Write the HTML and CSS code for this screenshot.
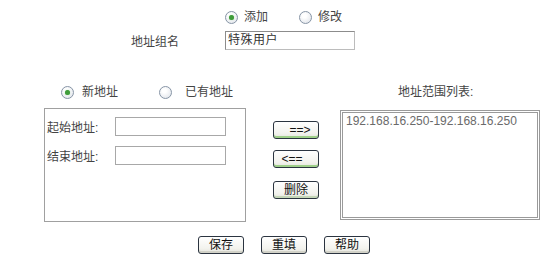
FILE: index.html
```html
<!DOCTYPE html>
<html lang="zh-CN">
<head>
    <meta charset="UTF-8">
    <title>地址组</title>
    <link rel="stylesheet" href="styles.css">
</head>
<body>
    <div class="page">
        <div class="mode-row">
            <span class="radio checked"></span><span class="radio-text">添加</span>
            <span class="radio gap-mode"></span><span class="radio-text">修改</span>
        </div>
        <div class="name-row">
            <span class="name-label">地址组名</span>
            <span class="text-input name-input">特殊用户</span>
        </div>
        <div class="editor">
            <div class="col-left">
                <div class="type-row">
                    <span class="radio checked"></span><span class="radio-text first-text">新地址</span>
                    <span class="radio gap-type"></span><span class="radio-text second-text">已有地址</span>
                </div>
                <div class="addr-box">
                    <div class="addr-row">
                        <span class="addr-label">起始地址:</span>
                        <span class="text-input addr-input"></span>
                    </div>
                    <div class="addr-row">
                        <span class="addr-label">结束地址:</span>
                        <span class="text-input addr-input"></span>
                    </div>
                </div>
            </div>
            <div class="col-mid">
                <button class="btn btn-green btn-right">==&gt;</button>
                <button class="btn btn-green btn-left">&lt;==</button>
                <button class="btn btn-del">删除</button>
            </div>
            <div class="col-right">
                <div class="list-title">地址范围列表:</div>
                <div class="list-box">
                    <div class="list-item">192.168.16.250-192.168.16.250</div>
                </div>
            </div>
        </div>
        <div class="actions">
            <button class="btn">保存</button>
            <button class="btn">重填</button>
            <button class="btn">帮助</button>
        </div>
    </div>
</body>
</html>
```

FILE: styles.css
```css
body {
    margin: 0;
    background: #ffffff;
    font-family: "Liberation Sans", "Noto Sans CJK SC", sans-serif;
    font-size: 12px;
    color: #444444;
}
.page {
    width: 551px;
    height: 257px;
    overflow: hidden;
}
.mode-row {
    display: flex;
    align-items: center;
    height: 13px;
    padding-top: 11px;
    padding-left: 225px;
}
.radio {
    display: inline-block;
    box-sizing: border-box;
    width: 13px;
    height: 13px;
    border: 1px solid #8795a6;
    border-radius: 50%;
    background: radial-gradient(circle at 40% 35%, #ffffff 20%, #e6e9ee 75%, #d4d9e0 100%);
    position: relative;
    flex: none;
}
.radio.checked::after {
    content: '';
    position: absolute;
    left: 3px;
    top: 3px;
    width: 5px;
    height: 5px;
    border-radius: 50%;
    background: #3f9c3a;
    box-shadow: 0 0 1px #7fc27a;
}
.radio-text {
    line-height: 13px;
    margin-left: 6px;
}
.gap-mode {
    margin-left: 31px;
}
.name-row {
    display: flex;
    align-items: center;
    margin-top: 7px;
    height: 19px;
}
.name-label {
    width: 94px;
    padding-left: 131px;
}
.text-input {
    display: block;
    box-sizing: border-box;
    border: 1px solid #a8a8a8;
    background: #ffffff;
}
.name-input {
    width: 130px;
    height: 19px;
    padding-left: 2px;
    line-height: 17px;
    letter-spacing: 0.5px;
    color: #333333;
    border-color: #8c8c8c #bcbcbc #bcbcbc #8c8c8c;
}
.editor {
    display: flex;
    margin-top: 36px;
}
.col-left {
    width: 202px;
    margin-left: 44px;
}
.type-row {
    display: flex;
    align-items: center;
    height: 12px;
    padding-left: 17px;
}
.first-text {
    margin-left: 8px;
}
.gap-type {
    margin-left: 41px;
}
.second-text {
    margin-left: 13px;
}
.addr-box {
    box-sizing: border-box;
    height: 114px;
    margin-top: 10px;
    border: 1px solid #a0a0a0;
    padding: 8px 0 0 2px;
}
.addr-row {
    display: flex;
    align-items: center;
    height: 19px;
    margin-bottom: 10px;
}
.addr-label {
    width: 68px;
}
.addr-input {
    width: 111px;
    height: 19px;
}
.col-mid {
    display: flex;
    flex-direction: column;
    width: 46px;
    margin-left: 27px;
    padding-top: 35px;
}
.btn {
    box-sizing: border-box;
    width: 46px;
    height: 18px;
    padding: 0;
    border: 1px solid #2b3440;
    border-radius: 3px;
    background: linear-gradient(#ffffff, #f3f3ee 70%, #e4e4dc);
    box-shadow: inset 0 -2px 0 #d2d2c8;
    font-family: "Liberation Sans", "Noto Sans CJK SC", sans-serif;
    font-size: 12px;
    line-height: 14px;
    color: #111111;
}
.btn-green {
    box-shadow: inset 0 -2px 0 #9fd08a;
    margin-bottom: 11px;
}
.btn-right {
    padding-left: 8px;
}
.btn-left {
    padding-right: 8px;
}
.btn-del {
    margin-top: 2px;
    box-shadow: inset 0 -2px 0 #c4d6b8;
}
.col-right {
    width: 200px;
    margin-left: 21px;
}
.list-title {
    height: 12px;
    line-height: 12px;
    padding-left: 58px;
}
.list-box {
    box-sizing: border-box;
    height: 110px;
    margin-top: 12px;
    border: 3px double #9a9a9a;
    padding: 1px 0 0 3px;
}
.list-item {
    font-family: "Liberation Sans", sans-serif;
    font-size: 12px;
    line-height: 14px;
    color: #6a6a6a;
}
.actions {
    display: flex;
    gap: 17px;
    margin-top: 14px;
    padding-left: 198px;
}
```
